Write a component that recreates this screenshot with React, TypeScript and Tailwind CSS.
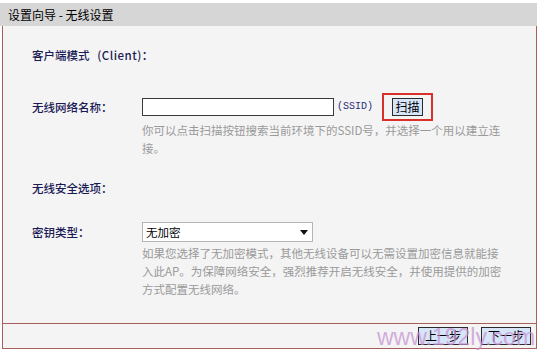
import React from 'react'

const FONT = { fontFamily: '"SimSun", "Noto Sans CJK SC", "Liberation Sans", sans-serif' }

function Label({ children }: { children: React.ReactNode }) {
  return <div className="w-[110px] shrink-0 text-[#1a1a55] font-medium">{children}</div>
}

function Btn({ children, w }: { children: React.ReactNode; w: string }) {
  return (
    <button className={`${w} h-[18px] bg-[#d6e5f8] border border-[#2b2b2b] text-black text-[12px] leading-[16px]`}>
      {children}
    </button>
  )
}

export default function App() {
  return (
    <div className="w-[540px] h-[353px] bg-white pt-[3px] text-[11.5px] leading-[18px] relative overflow-hidden" style={FONT}>
      <div className="w-[537px]">
        {/* title bar */}
        <div className="h-[23px] bg-[#d6d6d6] flex items-center pl-[8px] text-[12px] text-black">
          设置向导 - 无线设置
        </div>

        <div className="ml-[2px] w-[535px] border-x border-b border-[#a9605a] bg-[#f4f4f4]">
          <div className="h-[297px] pl-[29px] pt-[20px] flex flex-col">
            <div className="h-[18px] text-[#1a1a55] font-medium">
              客户端模式&nbsp;&nbsp;&nbsp;<span className="tracking-[0.5px]">(Client)：</span>
            </div>

            <div className="mt-[34px] flex items-center h-[18px]">
              <Label>无线网络名称：</Label>
              <input className="w-[192px] h-[18px] bg-white border border-[#3a3a3a] outline-none" />
              <span className="ml-[3px] text-[10px] text-[#2a2a7a]" style={{ fontFamily: '"Liberation Mono", monospace' }}>(SSID)</span>
              <div className="ml-[9px] w-[51px] h-[28px] border-2 border-[#d9302c] flex items-center justify-center">
                <Btn w="w-[31px]">扫描</Btn>
              </div>
            </div>
            <div className="mt-[5px] ml-[110px] w-[360px] text-[#9a9a9a]">
              你可以点击扫描按钮搜索当前环境下的SSID号，并选择一个用以建立连<br />接。
            </div>

            <div className="mt-[22px] h-[18px] text-[#1a1a55] font-medium">无线安全选项：</div>

            <div className="mt-[25px] flex items-center h-[20px]">
              <Label>密钥类型：</Label>
              <div className="w-[171px] h-[20px] bg-white border border-[#b5b5b5] flex items-center justify-between pl-[3px] pr-[4px] text-black">
                <span>无加密</span>
                <svg width="8" height="5" viewBox="0 0 8 5"><path d="M0 0h8L4 5z" fill="#111" /></svg>
              </div>
            </div>
            <div className="mt-[2px] ml-[110px] w-[360px] text-[#9a9a9a]">
              如果您选择了无加密模式，其他无线设备可以无需设置加密信息就能接<br />
              入此AP。为保障网络安全，强烈推荐开启无线安全，并使用提供的加密<br />
              方式配置无线网络。
            </div>
          </div>

          <div className="h-[25px] border-t border-[#a9605a] flex items-center justify-end gap-[13px] pr-[5px]">
            <Btn w="w-[50px]">上一步</Btn>
            <Btn w="w-[50px]">下一步</Btn>
          </div>
        </div>
      </div>

      <div className="absolute left-[377px] top-[324px] text-[23px] leading-[26px] text-[#c58fd0] opacity-70 pointer-events-none" style={{ fontFamily: '"Liberation Sans", Arial, sans-serif' }}>
        www.192ly.com
      </div>
    </div>
  )
}
